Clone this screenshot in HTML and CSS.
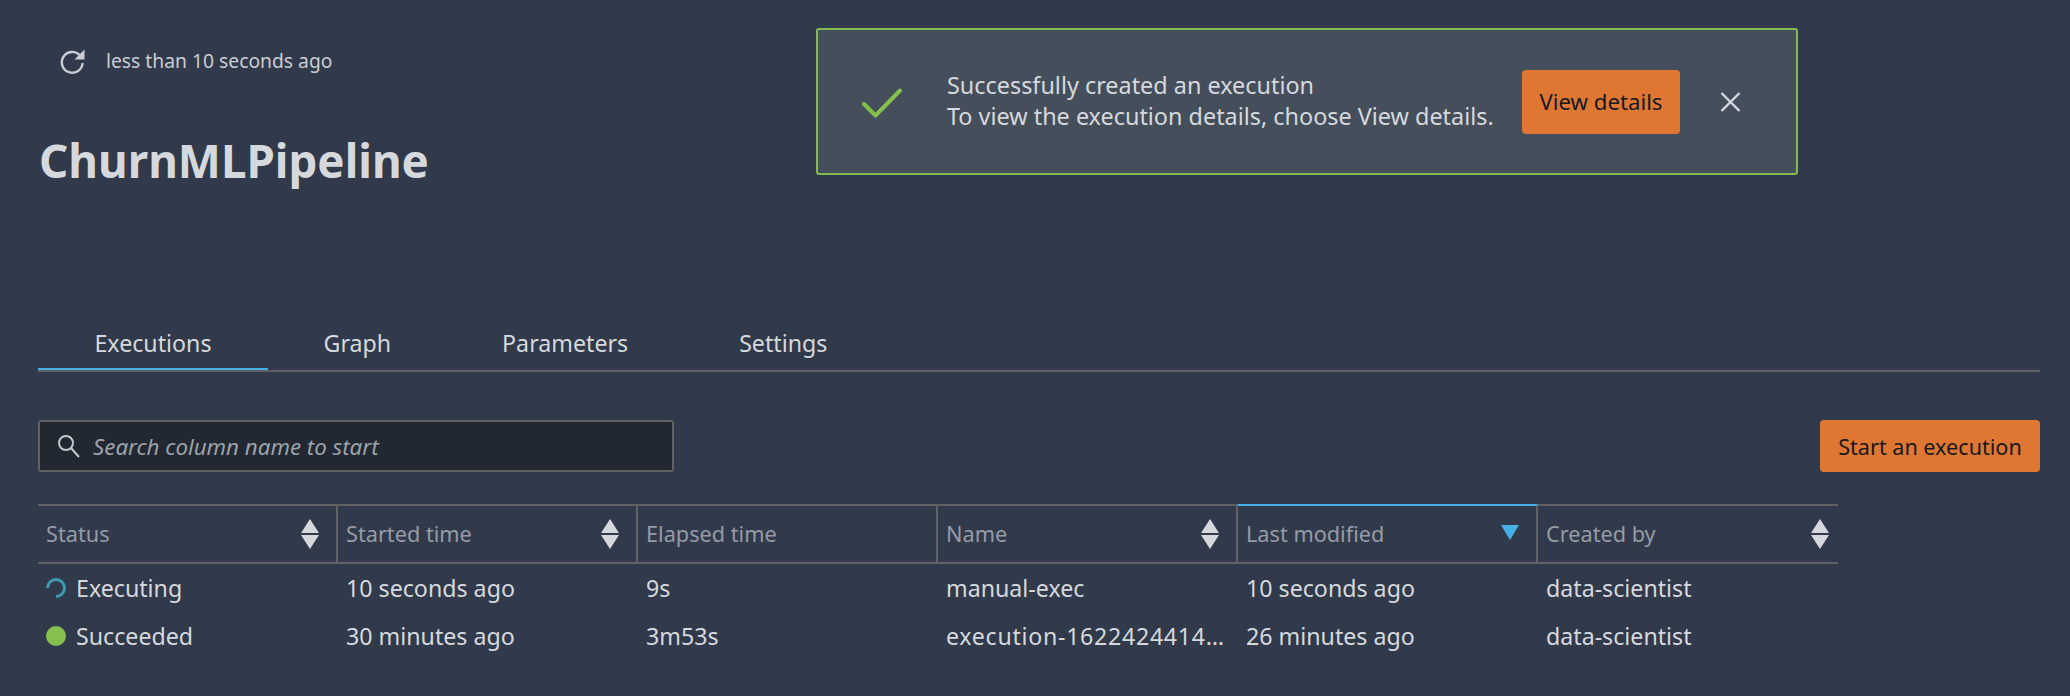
FILE: index.html
```html
<!DOCTYPE html>
<html lang="en">
<head>
<meta charset="utf-8">
<title>ChurnMLPipeline</title>
<link rel="stylesheet" href="styles.css">
</head>
<body>
<main class="page">
  <section class="top">
    <div class="heading">
      <div class="refresh">
        <svg class="refresh-icon" viewBox="0 0 25 25" width="25" height="25" aria-hidden="true"><path d="M19.8 6.2A10.4 10.4 0 1 0 22.6 14" fill="none" stroke="currentColor" stroke-width="2.4"/><path d="M24.5 0.5V10.5H14.5Z" fill="currentColor"/></svg>
        <span>less than 10 seconds ago</span>
      </div>
      <h1 class="title">ChurnMLPipeline</h1>
    </div>
    <div class="flash">
      <svg class="flash-check" viewBox="0 0 40 30" width="40" height="30" aria-hidden="true"><path d="M2 16L13.5 27.5L38 2.5" fill="none" stroke="currentColor" stroke-width="4" stroke-linecap="round" stroke-linejoin="round"/></svg>
      <div class="flash-text">
        <div>Successfully created an execution</div>
        <div>To view the execution details, choose View details.</div>
      </div>
      <button class="btn flash-btn">View details</button>
      <svg class="flash-close" viewBox="0 0 21 20" width="21" height="20" aria-hidden="true"><path d="M1.5 1L19.5 19M19.5 1L1.5 19" fill="none" stroke="currentColor" stroke-width="2.4"/></svg>
    </div>
  </section>

  <nav class="tabs">
    <a class="tab tab-active">Executions</a>
    <a class="tab">Graph</a>
    <a class="tab">Parameters</a>
    <a class="tab">Settings</a>
  </nav>

  <section class="toolbar">
    <div class="search">
      <svg class="search-icon" viewBox="0 0 24 24" width="24" height="24" aria-hidden="true"><circle cx="9" cy="9" r="7" fill="none" stroke="currentColor" stroke-width="2"/><path d="M14 14L22 23" fill="none" stroke="currentColor" stroke-width="2"/></svg>
      <span class="search-text">Search column name to start</span>
    </div>
    <button class="btn start-btn">Start an execution</button>
  </section>

  <section class="table">
    <div class="th"><span>Status</span><svg class="sort" viewBox="0 0 18 30" width="18" height="30" aria-hidden="true"><path d="M9 0L18 14H0ZM9 30L0 16H18Z" fill="currentColor"/></svg></div>
    <div class="th"><span>Started time</span><svg class="sort" viewBox="0 0 18 30" width="18" height="30" aria-hidden="true"><path d="M9 0L18 14H0ZM9 30L0 16H18Z" fill="currentColor"/></svg></div>
    <div class="th"><span>Elapsed time</span></div>
    <div class="th"><span>Name</span><svg class="sort" viewBox="0 0 18 30" width="18" height="30" aria-hidden="true"><path d="M9 0L18 14H0ZM9 30L0 16H18Z" fill="currentColor"/></svg></div>
    <div class="th th-active"><span>Last modified</span><svg class="sort-active" viewBox="0 0 18 15" width="18" height="15" aria-hidden="true"><path d="M0 0H18L9 15Z" fill="currentColor"/></svg></div>
    <div class="th"><span>Created by</span><svg class="sort" viewBox="0 0 18 30" width="18" height="30" aria-hidden="true"><path d="M9 0L18 14H0ZM9 30L0 16H18Z" fill="currentColor"/></svg></div>

    <div class="td"><svg class="status-icon spinner" viewBox="0 0 20 20" width="20" height="20" aria-hidden="true"><path d="M1.5 10A8.5 8.5 0 1 1 10 18.5" fill="none" stroke="currentColor" stroke-width="3"/></svg>Executing</div>
    <div class="td">10 seconds ago</div>
    <div class="td">9s</div>
    <div class="td">manual-exec</div>
    <div class="td">10 seconds ago</div>
    <div class="td">data-scientist</div>

    <div class="td"><span class="status-icon dot"></span>Succeeded</div>
    <div class="td">30 minutes ago</div>
    <div class="td">3m53s</div>
    <div class="td td-long">execution-1622424414…</div>
    <div class="td">26 minutes ago</div>
    <div class="td">data-scientist</div>
  </section>
</main>
</body>
</html>
```
FILE: styles.css
```css
* { box-sizing: border-box; }
html, body { margin: 0; height: 100%; }
body {
  background: #313a4a;
  color: #d5d9de;
  font-family: "Noto Sans", "Liberation Sans", sans-serif;
  font-size: 20px;
  overflow: hidden;
}
.page { padding: 0 30px 0 38px; }

.top { display: flex; height: 328px; align-items: flex-start; }
.heading { width: 778px; }
.refresh {
  display: flex;
  align-items: center;
  gap: 21px;
  margin: 49px 0 0 22px;
  height: 24px;
  font-size: 19.3px;
  line-height: 22px;
  color: #c9cdd3;
}
.refresh-icon { flex: none; margin-top: 1px; }
.title {
  margin: 56px 0 0 1px;
  font-size: 45.7px;
  font-weight: 700;
  line-height: 62px;
  color: #d5d9de;
}

.flash {
  display: flex;
  align-items: center;
  width: 982px;
  height: 147px;
  margin-top: 28px;
  padding: 0 55px 0 44px;
  background: #454f5c;
  border: 2px solid #83bb50;
  border-radius: 3px;
  line-height: 31px;
}
.flash-check { flex: none; color: #85c04f; margin-top: 3px; }
.flash-text { flex: 1; margin-left: 45px; font-size: 23.4px; margin-bottom: 2px; white-space: nowrap; }
.flash-close { flex: none; margin-left: 40px; color: #d5d9de; }

.btn {
  border: 0;
  border-radius: 4px;
  background: #df7733;
  color: #16191f;
  font-family: inherit;
  padding: 0;
}
.flash-btn { width: 158px; height: 64px; flex: none; font-size: 22.2px; }
.start-btn { width: 220px; height: 52px; flex: none; font-size: 21.6px; }

.tabs { display: flex; height: 44px; border-bottom: 2px solid #5f6163; width: 2002px; }
.tab {
  display: block;
  padding: 0 55.5px;
  height: 42px;
  text-align: center;
  line-height: 30px;
  font-size: 23.2px;
  color: #d5d9de;
}
.tab-active { border-bottom: 2px solid #44b0e4; width: 230px; padding: 0; }

.toolbar {
  display: flex;
  justify-content: space-between;
  align-items: flex-start;
  margin-top: 48px;
  height: 84px;
}
.search {
  display: flex;
  align-items: center;
  width: 636px;
  height: 52px;
  padding-left: 17px;
  background: #222831;
  border: 2px solid #5f6163;
  border-radius: 3px;
  color: #c4c8ce;
}
.search-icon { flex: none; }
.search-text { margin-left: 12px; font-style: italic; color: #9ba2ab; font-size: 22.3px; }

.table { display: grid; grid-template-columns: repeat(6, 300px); width: 1800px; }
.th {
  display: flex;
  align-items: center;
  justify-content: space-between;
  height: 60px;
  padding: 0 17px 1px 8px;
  border-top: 2px solid #5f6163;
  border-bottom: 2px solid #5f6163;
  border-right: 2px solid #5f6163;
  color: #959ca6;
  font-size: 21.7px;
}
.th:nth-child(6) { border-right: 0; padding-right: 9px; }
.th-active { border-top-color: #44b0e4; }
.sort { color: #d5d9de; flex: none; }
.sort-active { color: #44b0e4; flex: none; margin-top: -2px; }
.td {
  display: flex;
  align-items: center;
  height: 48px;
  padding: 0 8px 1px;
  font-size: 23.2px;
  min-width: 0;
  white-space: nowrap;
  color: #d5d9de;
}
.td-long { letter-spacing: 0.7px; }
.status-icon { flex: none; margin-right: 10px; }
.spinner { color: #3d9ab0; }
.dot { display: block; width: 20px; height: 20px; border-radius: 50%; background: #85c04f; }
```
